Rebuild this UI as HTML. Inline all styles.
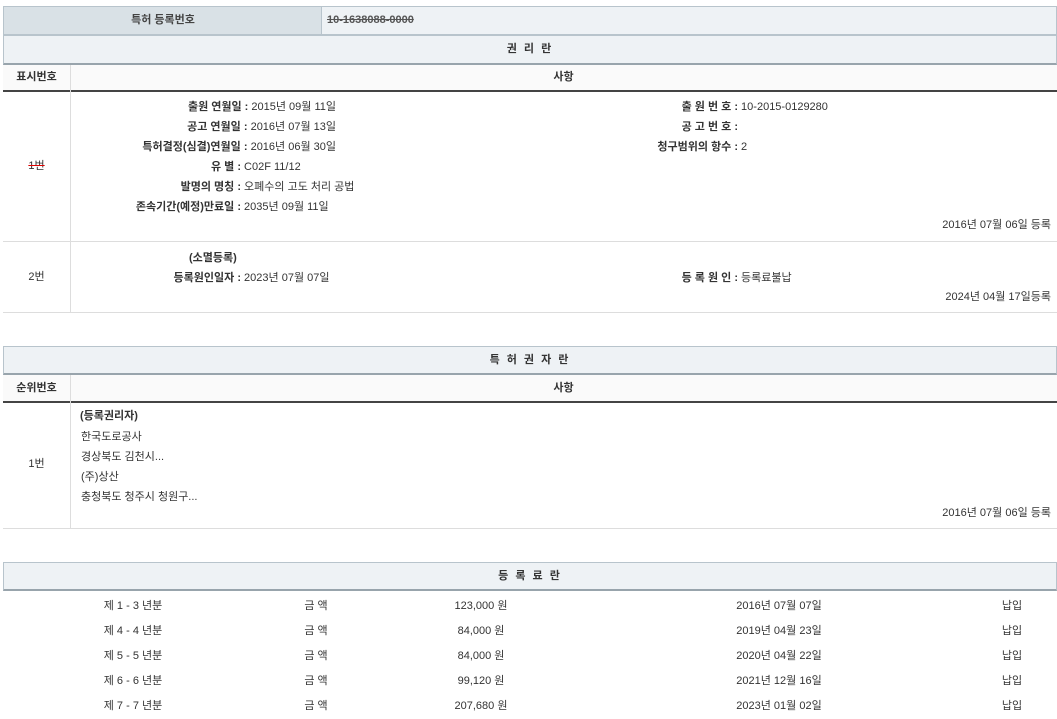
<!DOCTYPE html>
<html><head><meta charset="utf-8"><style>
body{margin:0;width:1057px;height:717px;background:#fff;position:relative;overflow:hidden;font-family:"Liberation Sans","Noto Sans CJK KR",sans-serif;font-size:11px;color:#333}
div{position:absolute;box-sizing:border-box}
.t{line-height:14px;white-space:nowrap}
.b{font-weight:bold}
.r{text-align:right}
.c{text-align:center}
.sec{left:3px;width:1054px;background:#eef2f5;border:1px solid #b8c4cc;border-bottom:2px solid #98a4ac}
.hd{left:3px;width:1054px;background:#fafafa;border-bottom:2px solid #444}
.vl{width:1px;background:#ddd;left:70px}
.hl{left:3px;width:1054px;height:1px;background:#ddd}
</style></head><body>
<div style="left:3px;top:6px;width:1054px;height:29px;border:1px solid #b8c4cc;background:#eef2f5"></div>
<div style="left:4px;top:7px;width:318px;height:27px;background:#d9e1e6;border-right:1px solid #b8c4cc"></div>
<div class="t b c" style="left:4px;top:13px;width:318px;color:#444">특허 등록번호</div>
<div class="t b" style="left:327px;top:13px;color:#555;text-decoration:line-through">10-1638088-0000</div>

<div class="sec" style="top:35px;height:30px"></div>
<div class="t b c" style="left:3px;top:42px;width:1054px;letter-spacing:2px">권 리 란</div>
<div class="hd" style="top:65px;height:27px"></div>
<div class="vl" style="top:65px;height:248px"></div>
<div class="t b c" style="left:3px;top:70px;width:67px">표시번호</div>
<div class="t b c" style="left:70px;top:70px;width:987px">사항</div>

<div class="t c" style="left:3px;top:159px;width:67px"><span style="text-decoration:line-through;text-decoration-color:#d00">1번</span></div>
<div class="t r" style="left:0;top:97px;width:336px;line-height:20px">
<b>출원 연월일 :</b> 2015년 09월 11일<br>
<b>공고 연월일 :</b> 2016년 07월 13일<br>
<b>특허결정(심결)연월일 :</b> 2016년 06월 30일<br>
</div>
<div class="t" style="left:0;top:157px;width:500px;line-height:20px">
<div style="position:static;display:block"><span style="display:inline-block;width:241px;text-align:right"><b>유 별 :</b></span> C02F 11/12</div>
<div style="position:static;display:block"><span style="display:inline-block;width:241px;text-align:right"><b>발명의 명칭 :</b></span> 오폐수의 고도 처리 공법</div>
<div style="position:static;display:block"><span style="display:inline-block;width:241px;text-align:right"><b>존속기간(예정)만료일 :</b></span> 2035년 09월 11일</div>
</div>
<div class="t" style="left:0;top:97px;width:900px;line-height:20px">
<div style="position:static;display:block"><span style="display:inline-block;width:738px;text-align:right"><b>출 원 번 호 :</b></span> 10-2015-0129280</div>
<div style="position:static;display:block"><span style="display:inline-block;width:738px;text-align:right"><b>공 고 번 호 :</b></span></div>
<div style="position:static;display:block"><span style="display:inline-block;width:738px;text-align:right"><b>청구범위의 항수 :</b></span> 2</div>
</div>
<div class="t r" style="left:0;top:218px;width:1051px">2016년 07월 06일 등록</div>
<div class="hl" style="top:241px"></div>

<div class="t c" style="left:3px;top:270px;width:67px">2번</div>
<div class="t b" style="left:189px;top:251px">(소멸등록)</div>
<div class="t" style="left:0;top:271px;width:500px"><span style="display:inline-block;width:241px;text-align:right"><b>등록원인일자 :</b></span> 2023년 07월 07일</div>
<div class="t" style="left:0;top:271px;width:900px"><span style="display:inline-block;width:738px;text-align:right"><b>등 록 원 인 :</b></span> 등록료불납</div>
<div class="t r" style="left:0;top:290px;width:1051px">2024년 04월 17일등록</div>
<div class="hl" style="top:312px"></div>

<div class="sec" style="top:346px;height:29px"></div>
<div class="t b c" style="left:3px;top:353px;width:1054px;letter-spacing:2px">특 허 권 자 란</div>
<div class="hd" style="top:375px;height:28px"></div>
<div class="vl" style="top:375px;height:154px"></div>
<div class="t b c" style="left:3px;top:381px;width:67px">순위번호</div>
<div class="t b c" style="left:70px;top:381px;width:987px">사항</div>
<div class="t c" style="left:3px;top:457px;width:67px">1번</div>
<div class="t b" style="left:80px;top:409px">(등록권리자)</div>
<div class="t" style="left:81px;top:427px;line-height:20px">한국도로공사<br>경상북도 김천시...<br>(주)상산<br>충청북도 청주시 청원구...</div>
<div class="t r" style="left:0;top:506px;width:1051px">2016년 07월 06일 등록</div>
<div class="hl" style="top:528px"></div>

<div class="sec" style="top:562px;height:29px"></div>
<div class="t b c" style="left:3px;top:569px;width:1054px;letter-spacing:2px">등 록 료 란</div>
<div class="t c" style="left:63px;top:594px;width:140px;line-height:25px">제 1 - 3 년분<br>제 4 - 4 년분<br>제 5 - 5 년분<br>제 6 - 6 년분<br>제 7 - 7 년분</div>
<div class="t c" style="left:276px;top:594px;width:80px;line-height:25px">금 액<br>금 액<br>금 액<br>금 액<br>금 액</div>
<div class="t c" style="left:421px;top:594px;width:120px;line-height:25px">123,000 원<br>84,000 원<br>84,000 원<br>99,120 원<br>207,680 원</div>
<div class="t c" style="left:709px;top:594px;width:140px;line-height:25px">2016년 07월 07일<br>2019년 04월 23일<br>2020년 04월 22일<br>2021년 12월 16일<br>2023년 01월 02일</div>
<div class="t c" style="left:982px;top:594px;width:60px;line-height:25px">납입<br>납입<br>납입<br>납입<br>납입</div>
</body></html>
